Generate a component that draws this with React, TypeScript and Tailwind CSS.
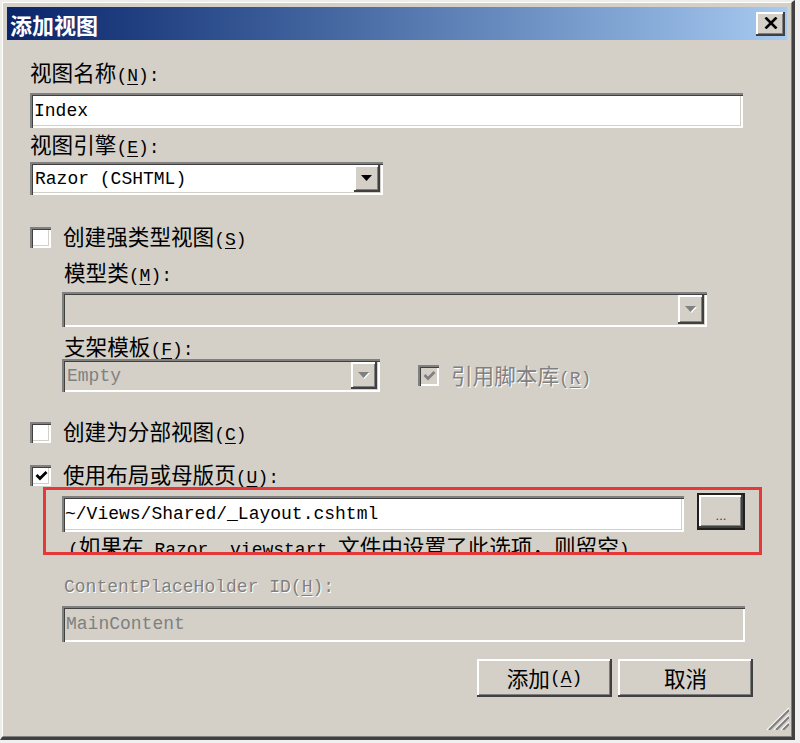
import React from "react";

const zh = "font-['Noto_Sans_CJK_SC',sans-serif] text-[21.6px]";
const en = "font-['Liberation_Mono','Noto_Sans_CJK_SC',monospace] text-[18px]";
const dim = "text-[#808080] [text-shadow:1px_1px_0_#ffffff]";

// classic 3d edges
const sunken =
  "shadow-[inset_2px_2px_0_#808080,inset_3px_3px_0_#404040,inset_-2px_-2px_0_#ffffff,inset_-3px_-3px_0_#d4d0c8]";
const raised =
  "shadow-[inset_-2px_-2px_0_#404040,inset_2px_2px_0_#ffffff,inset_-3px_-3px_0_#808080]";

const CJK = /[\u2e80-\u9fff\u3000-\u303f\uff00-\uffef]/;

function Mixed({ text }: { text: string }) {
  const parts = text.match(/[\u2e80-\u9fff\u3000-\u303f\uff00-\uffef]+|[^\u2e80-\u9fff\u3000-\u303f\uff00-\uffef]+/g) ?? [];
  return (
    <>
      {parts.map((p, i) => (
        <span key={i} className={CJK.test(p) ? zh : en}>
          {p}
        </span>
      ))}
    </>
  );
}

function Label({ text, k, tail = "", disabled }: { text: string; k: string; tail?: string; disabled?: boolean }) {
  return (
    <span className={`leading-none whitespace-nowrap ${disabled ? dim : "text-black"}`}>
      <Mixed text={text} />
      <span className={en}>(</span>
      <span className={`${en} underline underline-offset-[3px]`}>{k}</span>
      <span className={en}>){tail}</span>
    </span>
  );
}

function Check({ checked, disabled }: { checked?: boolean; disabled?: boolean }) {
  return (
    <div className={`w-[21px] h-[21px] shrink-0 flex items-center justify-center ${disabled ? "bg-[#d4d0c8]" : "bg-white"} ${sunken}`}>
      {checked && (
        <svg width="13" height="12" viewBox="0 0 13 12" className="ml-[1px] mt-[1px]">
          <path d="M1.5 5 L5 8.5 L11.5 2" fill="none" stroke={disabled ? "#808080" : "#000000"} strokeWidth="2.8" />
        </svg>
      )}
    </div>
  );
}

function Arrow({ disabled }: { disabled?: boolean }) {
  return (
    <svg width="12" height="8" viewBox="0 0 12 8">
      {disabled && <path d="M1 1 H12 L6.5 7 Z" fill="#ffffff" />}
      <path d="M0 0 H11 L5.5 6 Z" fill={disabled ? "#808080" : "#000000"} />
    </svg>
  );
}

function Combo({ value, disabled, className }: { value?: string; disabled?: boolean; className: string }) {
  return (
    <div className={`flex items-stretch p-[3px] ${disabled ? "bg-[#d4d0c8]" : "bg-white"} ${sunken} ${className}`}>
      <span className={`flex-1 flex items-center pl-[2px] leading-none ${en} ${disabled ? "text-[#808080]" : "text-black"}`}>
        {value}
      </span>
      <div className={`w-[26px] bg-[#d4d0c8] flex items-center justify-center ${raised}`}>
        <Arrow disabled={disabled} />
      </div>
    </div>
  );
}

function Field({ value, disabled, className }: { value: string; disabled?: boolean; className: string }) {
  return (
    <div className={`flex items-center leading-none ${en} ${disabled ? "bg-[#d4d0c8] text-[#808080]" : "bg-white text-black"} ${sunken} ${className}`}>
      {value}
    </div>
  );
}

function Button({ children }: { children: React.ReactNode }) {
  return (
    <div className={`w-[135px] h-[38px] bg-[#d4d0c8] flex items-center justify-center leading-none text-black ${raised}`}>
      {children}
    </div>
  );
}

function TitleBar() {
  return (
    <div className="h-[33px] shrink-0 flex items-center justify-between bg-linear-to-r from-[#0a246a] to-[#a6caf0] pl-[3px] pr-[2px]">
      <span className="font-['Noto_Sans_CJK_SC',sans-serif] font-bold text-[22px] leading-none text-white">添加视图</span>
      <div className={`w-[29px] h-[24px] bg-[#d4d0c8] flex items-center justify-center ${raised}`}>
        <svg width="14" height="12" viewBox="0 0 14 12" className="mb-[1px]">
          <path d="M1.5 0.5 L12.5 11.5 M12.5 0.5 L1.5 11.5" stroke="#000000" strokeWidth="2.6" />
        </svg>
      </div>
    </div>
  );
}

function Grip() {
  return (
    <svg width="26" height="26" viewBox="0 0 26 26" className="absolute right-[3px] bottom-[7px]">
      {[4, 11, 18].map((o) => (
        <g key={o}>
          <line x1={26} y1={o} x2={o} y2={26} stroke="#ffffff" strokeWidth="1.2" />
          <line x1={26} y1={o + 2} x2={o + 2} y2={26} stroke="#808080" strokeWidth="2.2" />
        </g>
      ))}
    </svg>
  );
}

export default function App() {
  return (
    <div className="relative w-[800px] h-[743px] bg-[#f0f0f0] overflow-hidden">
      <div className="relative w-[795px] h-[740px] bg-[#d4d0c8] border-t-2 border-l-2 border-r-[3px] border-b-[3px] border-t-[#efede8] border-l-[#efede8] border-r-[#404040] border-b-[#404040]">
        <div className="h-full flex flex-col border border-t-white border-l-white border-r-[#808080] border-b-[#808080] p-[4px]">
          <TitleBar />
          <div className="flex flex-col pl-[23px]">
            <div className="mt-[21px] h-[24px] flex items-center">
              <Label text="视图名称" k="N" tail=":" />
            </div>
            <Field value="Index" className="mt-[8px] w-[713px] h-[35px] pl-[4px]" />

            <div className="mt-[5px] h-[24px] flex items-center">
              <Label text="视图引擎" k="E" tail=":" />
            </div>
            <Combo value="Razor (CSHTML)" className="mt-[5px] w-[353px] h-[33px]" />

            <div className="mt-[30px] h-[24px] flex items-center gap-[12px]">
              <Check />
              <Label text="创建强类型视图" k="S" />
            </div>

            <div className="mt-[12px] h-[24px] flex items-center pl-[34px]">
              <Label text="模型类" k="M" tail=":" />
            </div>
            <Combo disabled className="mt-[7px] ml-[32px] w-[645px] h-[35px]" />

            <div className="mt-[8px] h-[24px] flex items-center pl-[34px]">
              <Label text="支架模板" k="F" tail=":" />
            </div>
            <div className="h-[33px] flex items-center">
              <Combo disabled value="Empty" className="ml-[32px] w-[318px] h-[33px]" />
              <div className="ml-[38px] flex items-center gap-[12px]">
                <Check checked disabled />
                <Label text="引用脚本库" k="R" disabled />
              </div>
            </div>

            <div className="mt-[28px] h-[24px] flex items-center gap-[12px]">
              <Check />
              <Label text="创建为分部视图" k="C" />
            </div>
            <div className="mt-[19px] h-[24px] flex items-center gap-[12px]">
              <Check checked />
              <Label text="使用布局或母版页" k="U" tail=":" />
            </div>

            <div className="mt-[6px] ml-[32px] flex items-start">
              <Field value="~/Views/Shared/_Layout.cshtml" className="mt-[3px] w-[622px] h-[36px] pl-[3px]" />
              <div className="ml-[13px] w-[48px] h-[37px] border-2 border-[#202020] bg-[#d4d0c8]">
                <div className={`w-full h-full flex items-end justify-center pb-[6px] font-['Liberation_Sans',sans-serif] text-[13px] leading-none text-[#404040] ${raised}`}>
                  ...
                </div>
              </div>
            </div>
            <div className="h-[23px] overflow-hidden ml-[38px] pt-[3px] leading-none whitespace-nowrap text-black">
              <Mixed text="(如果在 Razor _viewstart 文件中设置了此选项，则留空)" />
            </div>

            <div className={`mt-[20px] h-[24px] flex items-center pl-[34px] leading-none ${en} ${dim}`}>
              ContentPlaceHolder ID(<span className="underline underline-offset-[3px]">H</span>):
            </div>
            <Field value="MainContent" disabled className="mt-[7px] ml-[32px] w-[683px] h-[36px] pl-[4px]" />

            <div className="mt-[17px] flex justify-end gap-[6px] pr-[34px]">
              <Button>
                <span className={zh}>添加</span>
                <span className={en}>(</span>
                <span className={`${en} underline underline-offset-[3px]`}>A</span>
                <span className={en}>)</span>
              </Button>
              <Button>
                <span className={zh}>取消</span>
              </Button>
            </div>
          </div>
        </div>
        <Grip />
      </div>
      {/* red annotation frame */}
      <div className="absolute left-[43px] top-[487px] w-[719px] h-[68px] border-[3px] border-[#e53838]" />
    </div>
  );
}
